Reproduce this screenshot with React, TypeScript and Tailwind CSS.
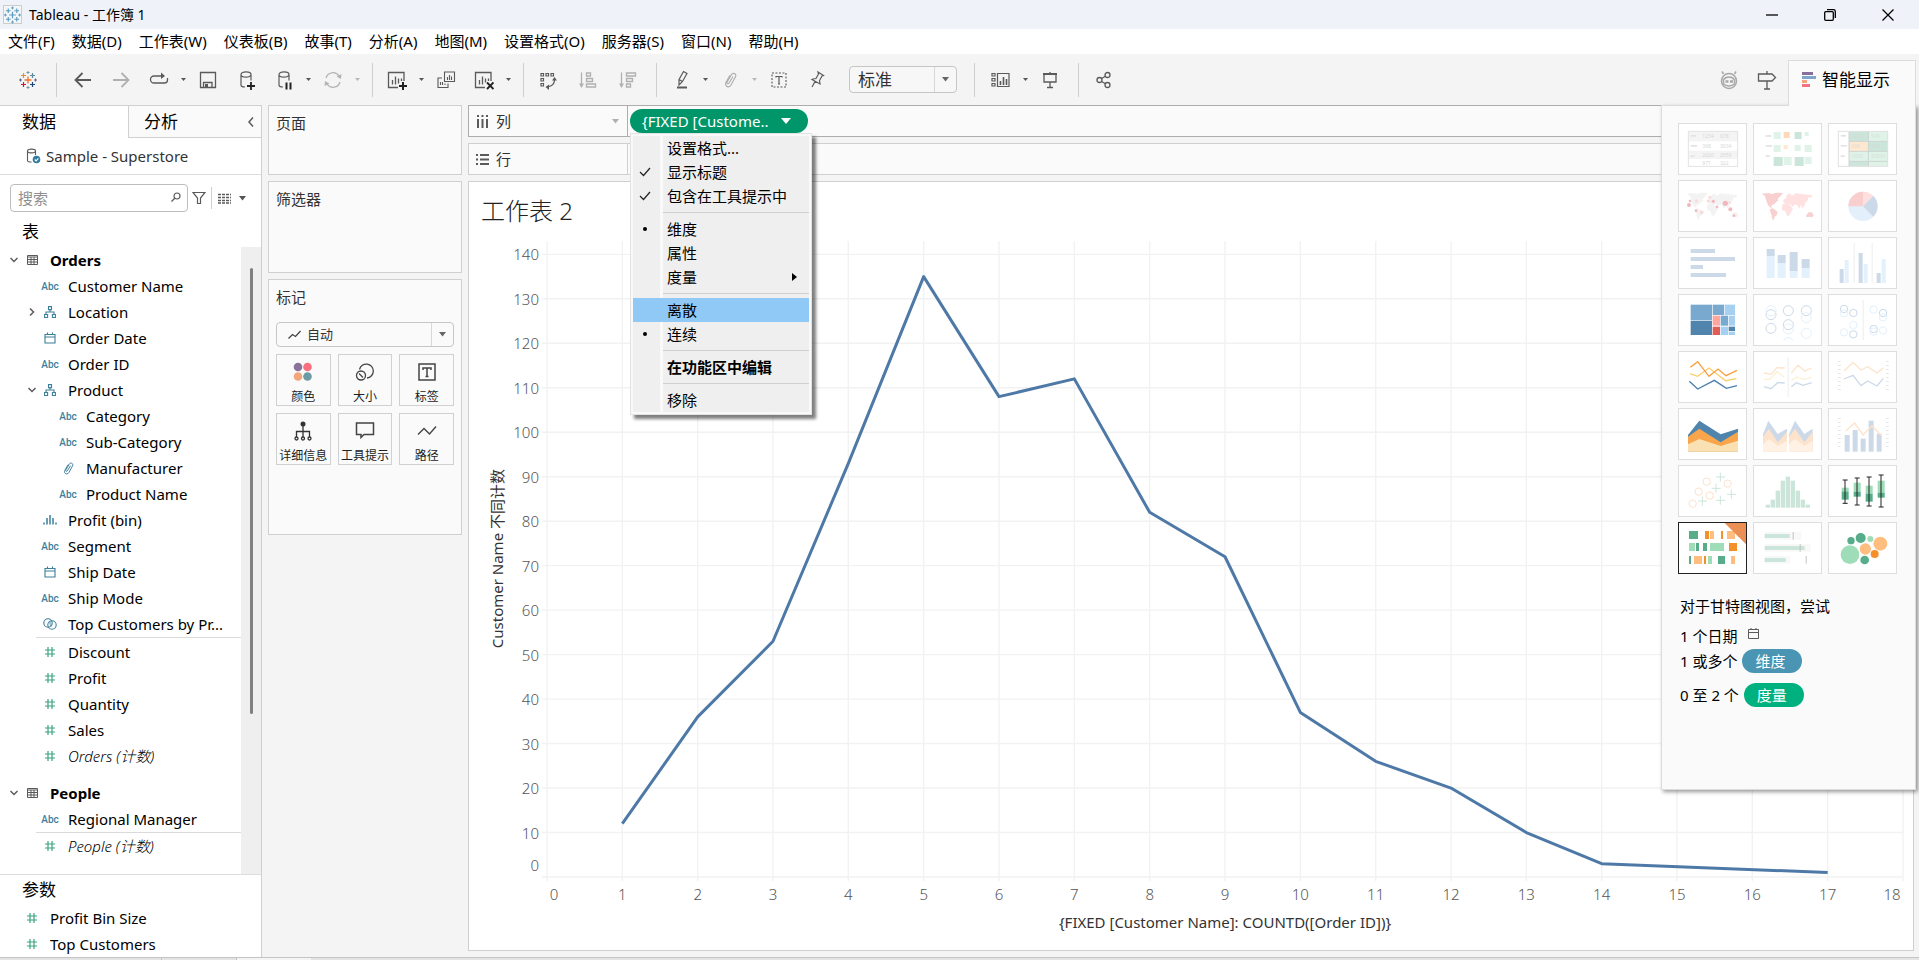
import React from 'react';

type Kind = 'abc' | 'geo' | 'date' | 'clip' | 'bin' | 'set' | 'num';

interface Field {
  name: string;
  kind: Kind;
  level?: number;
  open?: boolean;
  arrow?: boolean;
  italic?: boolean;
}

const orderDimensions: Field[] = [
  { name: 'Customer Name', kind: 'abc' },
  { name: 'Location', kind: 'geo', arrow: true },
  { name: 'Order Date', kind: 'date' },
  { name: 'Order ID', kind: 'abc' },
  { name: 'Product', kind: 'geo', arrow: true, open: true },
  { name: 'Category', kind: 'abc', level: 1 },
  { name: 'Sub-Category', kind: 'abc', level: 1 },
  { name: 'Manufacturer', kind: 'clip', level: 1 },
  { name: 'Product Name', kind: 'abc', level: 1 },
  { name: 'Profit (bin)', kind: 'bin' },
  { name: 'Segment', kind: 'abc' },
  { name: 'Ship Date', kind: 'date' },
  { name: 'Ship Mode', kind: 'abc' },
  { name: 'Top Customers by Pr...', kind: 'set' },
];

const orderMeasures: Field[] = [
  { name: 'Discount', kind: 'num' },
  { name: 'Profit', kind: 'num' },
  { name: 'Quantity', kind: 'num' },
  { name: 'Sales', kind: 'num' },
  { name: 'Orders (计数)', kind: 'num', italic: true },
];

const menus = ['文件(F)', '数据(D)', '工作表(W)', '仪表板(B)', '故事(T)', '分析(A)', '地图(M)', '设置格式(O)', '服务器(S)', '窗口(N)', '帮助(H)'];

const points = [
  [1, 12], [2, 36], [3, 53], [4, 93], [5, 135], [6, 108], [7, 112], [8, 82],
  [9, 72], [10, 37], [11, 26], [12, 20], [13, 10], [14, 3], [17, 1],
];

const X_MAX = 18;
const Y_MAX = 143;

interface SvgProps {
  w?: number;
  h?: number;
  className?: string;
  children: React.ReactNode;
}

const Svg = ({ w = 20, h = 20, className = 'text-[#5a5a5a]', children }: SvgProps) => (
  <svg width={w} height={h} viewBox={`0 0 ${w} ${h}`} fill="none" stroke="currentColor" strokeWidth="1.3" className={`shrink-0 ${className}`} aria-hidden="true">
    {children}
  </svg>
);

const Caret = ({ className = 'text-[#666]' }: { className?: string }) => (
  <svg width="7" height="5" viewBox="0 0 7 5" fill="currentColor" className={`shrink-0 ${className}`} aria-hidden="true">
    <path d="M0 0h7L3.5 4.5z" />
  </svg>
);

const Clip = () => (
  <path d="M13 6.500L9 13c-.8 1.300-2.600.3-1.900-1.100L11.500 4.500c1.500-2.500 5.500-.6 4 2.200L11 15c-2 3.500-7 1-5-2.700l4-7" strokeWidth="1.200" />
);

const KindIcon = ({ kind }: { kind: Kind }) => {
  if (kind === 'abc') return <span className="font-['Roboto'] text-[10px] font-medium text-[#3b7f9c]">Abc</span>;
  if (kind === 'geo')
    return (
      <Svg w={12} h={12} className="text-[#3b7f9c]">
        <path d="M4.500.600h3v3h-3zM.600 8.500h3v3h-3zM8.400 8.500h3v3h-3zM6 3.600v2.400M2 8.500V6h8v2.500" strokeWidth="1.100" />
      </Svg>
    );
  if (kind === 'date')
    return (
      <Svg w={12} h={12} className="text-[#3b7f9c]">
        <path d="M1 2.500h10v8.500H1zM1 5h10M3.500.500v2M8.500.500v2" strokeWidth="1.100" />
      </Svg>
    );
  if (kind === 'clip')
    return (
      <svg width="13" height="13" viewBox="3 2 15 16" fill="none" stroke="#3b7f9c">
        <Clip />
      </svg>
    );
  if (kind === 'bin')
    return (
      <Svg w={14} h={12} className="text-[#3b7f9c]">
        <path d="M1 8.500v2M4 4v6.500M7 1v9.500M10 4v6.500M13 8.500v2" strokeWidth="1.500" />
      </Svg>
    );
  if (kind === 'set')
    return (
      <Svg w={14} h={12} className="text-[#3b7f9c]">
        <circle cx="5" cy="5" r="4.200" strokeWidth="1.100" />
        <circle cx="9" cy="7" r="4.200" strokeWidth="1.100" />
        <path d="M6.500 3.500l2 5" strokeWidth="2" opacity=".5" />
      </Svg>
    );
  return (
    <Svg w={12} h={12} className="text-[#3ba37f]">
      <path d="M4 1v10M8 1v10M1 4h10M1 8h10" strokeWidth="1.200" />
    </Svg>
  );
};

const Chevron = ({ open }: { open?: boolean }) => (
  <Svg w={8} h={8}>
    <path d={open ? 'M.5 2l3.500 3.500L7.500 2' : 'M2 .5l3.500 3.500L2 7.500'} strokeWidth="1.500" />
  </Svg>
);

const FieldRow = ({ field }: { field: Field }) => (
  <li className={`flex h-[26px] items-center ${field.level ? 'pl-[46px]' : 'pl-[28px]'}`}>
    <span className="flex w-2 shrink-0">{field.arrow && <Chevron open={field.open} />}</span>
    <span className="flex w-[28px] shrink-0 justify-center"><KindIcon kind={field.kind} /></span>
    <span className={`pl-1 whitespace-nowrap ${field.italic ? 'font-light italic' : ''}`}>{field.name}</span>
  </li>
);

const TableHeading = ({ name }: { name: string }) => (
  <div className="flex h-[26px] items-center pl-[10px]">
    <Chevron open />
    <span className="flex w-[28px] justify-center">
      <Svg w={11} h={10}>
        <path d="M.5.500h10v9H.5zM.5 2h10M.5 4.500h10M.5 7h10M4 2v7.500M7 2v7.500" strokeWidth="1" />
      </Svg>
    </span>
    <h3 className="pl-1 font-bold">{name}</h3>
  </div>
);

const Tool = ({ label, children }: { label: string; children: React.ReactNode }) => (
  <button aria-label={label} className="flex h-9 w-[38px] shrink-0 items-center justify-center">{children}</button>
);

const ToolCaret = ({ label, dim }: { label: string; dim?: boolean }) => (
  <button aria-label={label} className="flex h-9 w-[11px] shrink-0 items-center justify-center">
    <svg width="5" height="3" viewBox="0 0 5 3" fill={dim ? '#b8b8b8' : '#555'} aria-hidden="true"><path d="M0 0h5L2.500 3z" /></svg>
  </button>
);

const Rule = () => <span className="mr-[5px] ml-[9px] h-[34px] w-px shrink-0 bg-[#cfcfcf]" />;

const Logo = ({ muted }: { muted?: boolean }) => {
  const tint = (c: string) => (muted ? '#5b9bc0' : c);
  return (
    <svg width="18" height="18" viewBox="0 0 18 18" fill="none" aria-hidden="true">
      <path d="M9 5.500v7M5.500 9h7" stroke={tint('#e8762d')} strokeWidth="1.300" />
      <path d="M4.500 2v5M2 4.500h5" stroke={tint('#e0912f')} strokeWidth="1.200" />
      <path d="M13.500 2v5M11 4.500h5" stroke={tint('#5b879b')} strokeWidth="1.200" />
      <path d="M4.500 11v5M2 13.500h5" stroke={tint('#c72035')} strokeWidth="1.200" />
      <path d="M13.500 11v5M11 13.500h5" stroke={tint('#1f457e')} strokeWidth="1.200" />
      <path d="M9 0v3M7.500 1.500h3M9 15v3M7.500 16.500h3" stroke={tint('#7199a6')} />
      <path d="M1.500 7.500v3M0 9h3M16.500 7.500v3M15 9h3" stroke={tint('#5c6692')} />
    </svg>
  );
};

const Cylinder = () => (
  <path d="M5 4.500V15c0 1 1.500 2 4 2M15 4.500v6M5 4.500C5 1 15 1 15 4.500S5 8 5 4.500z" strokeWidth="1.200" />
);

const Toolbar = () => (
  <div className="relative flex h-[51px] shrink-0 items-center bg-[#f4f4f4]">
    <button aria-label="Tableau" className="flex w-[47px] justify-center pl-2"><Logo /></button>
    <Rule />
    <div className="flex pl-[2px]">
      <Tool label="撤消"><Svg><path d="M18 10H3M9.500 3L2.500 10l7 7" strokeWidth="1.800" /></Svg></Tool>
      <Tool label="重做"><Svg className="text-[#b0b0b0]"><path d="M2 10h15M10.500 3l7 7-7 7" strokeWidth="1.800" /></Svg></Tool>
      <Tool label="恢复">
        <Svg><path d="M14 6H5a3.500 3.500 0 000 7h10.500a3 3 0 003-3V8" /><path d="M12 2.500L16 6l-4 3z" fill="currentColor" stroke="none" /></Svg>
      </Tool>
      <ToolCaret label="恢复选项" />
      <Tool label="保存"><Svg><path d="M2.500 2.500h15v15h-15zM5.500 17.500v-5h8.500v5" /><path d="M7 14h3v3.500H7z" fill="currentColor" stroke="none" /></Svg></Tool>
      <Tool label="新建数据源"><Svg><Cylinder /><path d="M15 12v8M11 16h8" stroke="#222" strokeWidth="1.800" /></Svg></Tool>
      <Tool label="暂停更新"><Svg><Cylinder /><path d="M12.500 12.500v7M16.500 12.500v7" stroke="#222" strokeWidth="2" /></Svg></Tool>
      <ToolCaret label="更新选项" />
      <Tool label="刷新">
        <Svg className="text-[#b4b4b4]"><path d="M3 8a7.200 7.200 0 0113-2M17 12a7.200 7.200 0 01-13 2" /><path d="M18.500 4l-.500 5-4.500-2.500zM1.500 16l.5-5 4.500 2.500z" fill="currentColor" stroke="none" /></Svg>
      </Tool>
      <ToolCaret label="刷新选项" dim />
    </div>
    <Rule />
    <div className="flex">
      <Tool label="新建工作表"><Svg><path d="M11 17.500H1.500v-15h15.500V11M5.500 10v4.500M8.500 6.500v8M11.500 8.500v5M14.500 8.500V11" /><path d="M16 12v8M12 16h8" stroke="#222" strokeWidth="2" /></Svg></Tool>
      <ToolCaret label="新建选项" />
      <Tool label="复制"><Svg><path d="M8.500 2h10v9.500h-10zM6 8H2v9.500h10v-4M11.500 7v3M13.500 5v5M15.500 6.500V10M4.500 12v3M6.500 12v3M9 13.500V15" strokeWidth="1.100" /></Svg></Tool>
      <Tool label="清除工作表"><Svg><path d="M11 17.500H1.500v-15h15.500V11M5.500 10v4.500M8.500 6.500v8M11.500 8.500v4M14.500 8.500V11" /><path d="M13 12.500l6.500 6.500M19.500 12.500L13 19" stroke="#222" strokeWidth="1.900" /></Svg></Tool>
      <ToolCaret label="清除选项" />
    </div>
    <Rule />
    <div className="flex gap-0.5">
      <Tool label="交换行和列">
        <Svg><path d="M3 3.500h2.500V6H3zM8 3.500h2.500V6H8zM13 3.500h2.500V6H13zM3 8.500h2.500V11H3zM3 13.500h2.500V16H3zM16.500 10c0 4-2 6-7 7" strokeWidth="1.200" /><path d="M16.500 7l2.500 3.500h-5zM7.500 17l3.500-2.500V20z" fill="currentColor" stroke="none" /></Svg>
      </Tool>
      <Tool label="升序排序">
        <Svg className="text-[#b0b0b0]"><path d="M3.500 2.500v12M8.500 3h4v3h-4zM8.500 8.500h6v3h-6zM8.500 14h9v3h-9z" /><path d="M1 13.500h5L3.500 18z" fill="currentColor" stroke="none" /></Svg>
      </Tool>
      <Tool label="降序排序">
        <Svg className="text-[#b0b0b0]"><path d="M3.500 2.500v12M8.500 3h9v3h-9zM8.500 8.500h6v3h-6zM8.500 14h4v3h-4z" /><path d="M1 13.500h5L3.500 18z" fill="currentColor" stroke="none" /></Svg>
      </Tool>
    </div>
    <Rule />
    <div className="flex">
      <Tool label="突出显示"><Svg><path d="M8 9.500L12.500 1.500l3.500 2-4.500 8-3.500 3.500zM8 9.500l3.500 2" strokeWidth="1.200" /><path d="M6 17.500h10" strokeWidth="2" /></Svg></Tool>
      <ToolCaret label="突出显示选项" />
      <Tool label="组成员"><Svg className="text-[#b0b0b0]"><Clip /></Svg></Tool>
      <ToolCaret label="组选项" dim />
      <Tool label="显示标记标签"><Svg><path d="M3 3h14v14H3z" strokeDasharray="2 1.500" strokeWidth="1.100" /><path d="M7 7.500V6.500h6v1M10 6.500v7.500M9 14h2" strokeWidth="1.200" /></Svg></Tool>
      <Tool label="固定轴"><Svg><path d="M11 2l5.500 3.500-1.500.5-2.500 4.500.5 3.500-8-4.500 1-.5 3-.5L11.500 4zM8 11.500L5 17" strokeWidth="1.200" /></Svg></Tool>
    </div>
    <div className="relative mr-2 ml-[13px] flex">
      <select aria-label="适合" className="h-[27px] w-[108px] appearance-none rounded-sm border border-[#c6c6c6] bg-[#f7f7f7] pl-2 text-[17px] leading-6 text-[#333]">
        <option>标准</option>
      </select>
      <span className="pointer-events-none absolute inset-y-px right-px flex w-[22px] items-center justify-center border-l border-[#d8d8d8]"><Caret /></span>
    </div>
    <Rule />
    <div className="flex pl-[2px]">
      <Tool label="显示/隐藏卡"><Svg><path d="M6.500 3.500H18v13H6.500zM1 3.500h3v2.500H1zM1 8.500h3V11H1zM1 13.500h3V16H1z" strokeWidth="1.200" /><path d="M9.500 11v4M12.500 7v8M15.500 9v6" strokeWidth="1.600" /></Svg></Tool>
      <ToolCaret label="卡选项" />
      <Tool label="演示模式"><Svg><path d="M4 4v8h12V4M10 12v5.500M7 17.500h6M10 2v2" /><path d="M3 4h14" strokeWidth="2" /></Svg></Tool>
    </div>
    <Rule />
    <Tool label="共享"><Svg><circle cx="6.500" cy="10" r="2.500" /><circle cx="14.500" cy="5" r="2.500" /><circle cx="14.500" cy="15" r="2.500" /><path d="M8.500 8.500l4-2.300M8.500 11.500l4 2.300" /></Svg></Tool>

    <div className="ml-auto flex h-full items-center">
      <Tool label="Data Guide">
        <Svg className="text-[#a8a8a8]"><circle cx="10" cy="11" r="7.500" strokeWidth="1.500" /><path d="M4.500 4L3 1.500M15.500 4L17 1.500M4.500 10c2-4 9-4 11 0v4c-3 2.500-8 2.500-11 0z" strokeWidth="1.500" /><path d="M6.500 11.500h3M11 11.500h3" strokeWidth="2.500" /></Svg>
      </Tool>
      <Tool label="指南"><Svg><path d="M1.500 4H15l3.500 3.500L15 11H1.500zM10 1v3M10 11v8M7 19h6" /></Svg></Tool>
      <button className="relative z-30 mr-[3px] -mb-px ml-0.5 flex h-[46px] w-[128px] items-center gap-[6px] self-end border border-b-0 border-[#dcdcdc] bg-[#fafafa] pb-[7px] pl-[13px] text-[17px]">
        <svg width="14" height="16" viewBox="0 0 14 16" aria-hidden="true">
          <path d="M0 0h11v3H0z" fill="#866f9a" /><path d="M0 4h14v3H0z" fill="#7fa5cb" />
          <path d="M0 8h5v3H0z" fill="#f3a57c" /><path d="M0 12h8v3H0z" fill="#f6707f" />
        </svg>
        智能显示
      </button>
    </div>
    <ShowMe />
  </div>
);

const world = [
  'M26 41l20-2 12 3 10-4 22 1-8 10-9 8 4 4-7 4-6 8-6 1-4 6 8 8-5-2-12-10-5-14-4-14z',
  'M52 86l10 0 12 10-3 10-6 4-4 12-4-8-2-12-4-8z',
  'M88 73l10-3 12 4 10 12-6 10-4 10-8 2-5-14-10-4z',
  'M90 66l3-8 5-2 4-12 8-4 6 8 12-8 12 1 38 5-4 8-8-2-2 10-6 4-4 12-6 8-4-12-6 12-6-12-8 0-6 6-6-8-8 2z',
  'M160 104l8-8 10 2 4 8-4 6-8-2-10 2z',
];

const line = (color: string, d: string) => <path d={d} fill="none" stroke={color} strokeWidth="4" />;
const bars = (color: string, rects: number[][]) => rects.map(([x, y, w, h], i) => <rect key={i} x={x} y={y} width={w} height={h} fill={color} />);
const rings = (color: string, list: number[][], r: number) => list.map(([x, y], i) => <circle key={i} cx={x} cy={y} r={r} fill="none" stroke={color} strokeWidth="3" />);
const dots = (color: string, list: number[][]) => list.map(([x, y, r], i) => <circle key={i} cx={x} cy={y} r={r} fill={color} />);
const nums = (list: [number, number, string][]) => list.map(([x, y, t], i) => <text key={i} x={x} y={y} fontSize="15" fill="#d4d8d6">{t}</text>);

// all thumbnails share a 207 x 156 drawing area
const charts: { title: string; art: React.ReactNode }[] = [
  {
    title: '文本表',
    art: (
      <>
        {bars('#f4f4f4', [[31, 25, 148, 30], [31, 83, 148, 25]])}
        {bars('#e3e3e3', [[38, 36, 16, 5], [38, 66, 19, 5], [38, 97, 12, 5]])}
        <rect x="31" y="25" width="148" height="105" fill="none" stroke="#e3e3e3" strokeWidth="3" />
        {nums([[73, 46, '1234'], [126, 46, '678'], [73, 74, '368'], [126, 74, '3034'], [73, 101, '2620'], [126, 101, '2559'], [73, 125, '971'], [126, 125, '322']])}
      </>
    ),
  },
  {
    title: '热图',
    art: (
      <>
        {bars('#e6e6e6', [[38, 36, 17, 6], [38, 66, 19, 6], [38, 96, 12, 6]])}
        {bars('#e0f3e8', [[62, 27, 21, 21], [155, 27, 12, 12], [62, 66, 21, 21], [125, 66, 18, 18], [155, 66, 21, 21], [92, 102, 24, 24], [155, 102, 21, 21]])}
        {bars('#cce5da', [[125, 27, 21, 21], [62, 102, 27, 27], [125, 102, 27, 27]])}
        {bars('#fcd9b8', [[92, 27, 18, 18]])}
        {bars('#fee8d0', [[92, 66, 12, 12]])}
      </>
    ),
  },
  {
    title: '突出显示表',
    art: (
      <>
        {bars('#e0f3e8', [[121, 25, 58, 30], [63, 85, 58, 30], [121, 85, 58, 45]])}
        {bars('#cce5da', [[63, 25, 58, 30], [121, 55, 58, 30], [63, 115, 58, 15]])}
        {bars('#fee8d0', [[63, 55, 58, 30]])}
        {bars('#e3e3e3', [[38, 36, 16, 5], [38, 66, 19, 5], [38, 97, 12, 5]])}
        <path d="M63 25v106M121 25v106M63 55h116M63 85h116M63 115h116" stroke="#ccd4d0" strokeWidth="3" />
        <rect x="31" y="25" width="148" height="105" fill="none" stroke="#e0e0e0" strokeWidth="3" />
        <g opacity=".7">{nums([[70, 45, '1234'], [129, 45, '546'], [70, 75, '368'], [129, 75, '340'], [70, 105, '2620'], [129, 105, '53890']])}</g>
      </>
    ),
  },
  {
    title: '符号地图',
    art: (
      <>
        {world.map((d) => <path key={d} d={d} fill="#f3f3f3" />)}
        {dots('#f0b9bf', [[33, 75, 6], [36, 63, 4], [142, 70, 8], [106, 64, 5], [157, 88, 6], [54, 92, 4], [117, 81, 4], [168, 107, 4]])}
        {dots('#fbdcdc', [[55, 63, 5], [96, 52, 5], [91, 63, 5], [71, 97, 6], [155, 68, 4]])}
      </>
    ),
  },
  { title: '填充地图', art: world.map((d, i) => <path key={d} d={d} fill={i < 2 || i === 4 ? '#f8d0d0' : '#ffe1e1'} />) },
  {
    title: '饼图',
    art: (
      <>
        <circle cx="105" cy="79" r="44" fill="#e3f0fb" />
        <path d="M105 79H61a44 44 0 0144-44z" fill="#f8cfcd" />
        <path d="M105 79V35a44 44 0 0131 13z" fill="#ffe0e0" />
        <path d="M105 79l31-31a44 44 0 010 62z" fill="#ccd9e8" />
      </>
    ),
  },
  { title: '水平条', art: bars('#ccd9e8', [[38, 36, 73, 12], [38, 60, 133, 12], [38, 84, 37, 12], [38, 108, 106, 12]]) },
  {
    title: '堆叠条',
    art: (
      <>
        {bars('#ccd9e8', [[41, 36, 24, 22], [74, 54, 24, 24], [110, 45, 24, 57], [146, 66, 24, 27]])}
        {bars('#e3f1fc', [[41, 57, 24, 66], [74, 78, 24, 45], [110, 102, 24, 21], [146, 93, 24, 30]])}
      </>
    ),
  },
  {
    title: '并排条',
    art: (
      <>
        {bars('#ccd9e8', [[35, 96, 12, 42], [92, 48, 12, 90], [146, 108, 12, 30]])}
        {bars('#e3f1fc', [[50, 69, 12, 69], [107, 81, 12, 57], [161, 66, 12, 72]])}
        {bars('#ededed', [[77, 18, 3, 120], [131, 18, 3, 120]])}
      </>
    ),
  },
  {
    title: '树状图',
    art: (
      <>
        {bars('#7aa9cf', [[38, 32, 64, 46], [104, 32, 34, 31], [128, 65, 22, 30]])}
        {bars('#5084ad', [[38, 80, 64, 43], [152, 98, 19, 13]])}
        {bars('#a6d0f0', [[140, 32, 31, 31], [152, 65, 19, 30], [128, 98, 22, 25], [152, 113, 19, 10]])}
        {bars('#ffa59c', [[104, 65, 22, 30]])}
        {bars('#e15e57', [[104, 98, 22, 25]])}
      </>
    ),
  },
  {
    title: '圆视图',
    art: (
      <>
        {rings('#ccd9e8', [[54, 62], [54, 103], [106, 50], [106, 92], [160, 50]], 15)}
        {rings('#e3f1fc', [[54, 50], [106, 105], [160, 71], [160, 118]], 15)}
        <path d="M92 140a15 15 0 0128 0" fill="none" stroke="#e3f1fc" strokeWidth="3" />
      </>
    ),
  },
  {
    title: '并排圆',
    art: (
      <>
        {rings('#ccd9e8', [[48, 45], [76, 57], [165, 57], [137, 105], [76, 121]], 11)}
        {rings('#e3f1fc', [[48, 58], [76, 93], [48, 115], [137, 47], [165, 70], [137, 113], [165, 109]], 11)}
        {bars('#ededed', [[104, 18, 3, 120]])}
      </>
    ),
  },
  {
    title: '连续线',
    art: (
      <>
        {line('#f8cf6a', 'M36 68l23 8 34-25 50 38 32-6')}
        {line('#f89f41', 'M37 49l22-17 34 44 27-22 24 20 33-16')}
        {line('#4a7fb0', 'M34 91l25 23 50-26 36 24 32-8')}
      </>
    ),
  },
  {
    title: '离散线',
    art: (
      <>
        {line('#fde3cb', 'M33 66l21 4 18-20 23 1M115 66l20-23 20 17 21-9')}
        {line('#fdf0d6', 'M33 86l18-2 21-22 21 16M115 88l17-10 20 8 24-7')}
        {line('#ccd9e8', 'M33 107l21 6 20-18 21 1M115 107l15-12 20 8 26-8')}
        {bars('#ededed', [[104, 18, 3, 120]])}
      </>
    ),
  },
  {
    title: '双线',
    art: (
      <>
        {line('#fde3cb', 'M48 60l27-26 24 23 20-10 28 19 19-16')}
        {line('#ccd9e8', 'M48 84l27-11 24 31 20-14 28 15 19-23')}
        <path d="M34 30v95M178 30v95" stroke="#e6e6e6" strokeWidth="8" strokeDasharray="3 9" />
      </>
    ),
  },
  {
    title: '连续区域图',
    art: (
      <>
        <path d="M30 81l34-43 64 41 52-17v69H30z" fill="#4f84ad" />
        <path d="M30 86l34-24 64 41 52-32v60H30z" fill="#f9a54b" />
        <path d="M30 109l34-16 64 21 52-16v33H30z" fill="#f9e1b4" />
      </>
    ),
  },
  {
    title: '离散区域图',
    art: (
      <>
        <path d="M30 79l16-41 28 40 28-16v69H30zM108 79l18-41 28 40 25-16v69h-71z" fill="#ccd9e8" />
        <path d="M30 86l18-24 26 41 28-32v60H30zM108 86l18-24 28 41 25-32v60h-71z" fill="#fde3cb" />
        <path d="M30 109l18-16 26 21 28-16v33H30zM108 109l18-16 28 21 25-16v33h-71z" fill="#fff2e4" />
      </>
    ),
  },
  {
    title: '双组合图',
    art: (
      <>
        {bars('#ccd9e8', [[50, 81, 15, 50], [74, 66, 15, 65], [98, 92, 15, 39], [122, 38, 15, 93], [146, 77, 15, 54]])}
        {line('#fde3cb', 'M53 69l27-24 25 36 27-27 27 28')}
        <path d="M34 30v95M178 30v95" stroke="#e6e6e6" strokeWidth="8" strokeDasharray="3 9" />
      </>
    ),
  },
  {
    title: '散点图',
    art: (
      <>
        {rings('#fde3cb', [[86, 50], [149, 56], [62, 80], [95, 92], [44, 116]], 11)}
        <path d="M114 36h27M127 23v27M101 70h27M114 56v27M147 88h27M160 74v27M114 106h27M127 92v27M60 108h27M73 95v27" stroke="#cce5da" strokeWidth="3" />
      </>
    ),
  },
  { title: '直方图', art: bars('#cce5da', [[38, 119, 13, 9], [53, 104, 13, 24], [68, 77, 13, 51], [83, 47, 13, 81], [98, 35, 13, 93], [113, 47, 13, 81], [128, 77, 13, 51], [143, 104, 13, 24], [158, 119, 13, 9]]) },
  {
    title: '盒须图',
    art: (
      <>
        {bars('#9fdcb8', [[41, 68, 21, 13], [77, 53, 21, 27], [113, 62, 21, 24], [149, 47, 21, 36]])}
        {bars('#57ad8a', [[41, 80, 21, 24], [77, 80, 21, 15], [113, 86, 21, 24], [149, 83, 21, 15]])}
        <path d="M51 45v70M44 45h15M44 115h15M87 39v81M80 39h15M80 120h15M123 36v87M116 36h15M116 123h15M159 30v96M152 30h15M152 126h15" stroke="#222" strokeWidth="3" />
      </>
    ),
  },
  {
    title: '甘特图',
    art: (
      <>
        {bars('#57ad8a', [[33, 27, 27, 24], [54, 63, 9, 24], [75, 63, 12, 24], [33, 102, 6, 24], [120, 102, 21, 24]])}
        {bars('#9fdcb8', [[33, 63, 18, 24], [96, 63, 42, 24], [90, 102, 12, 24]])}
        {bars('#f58f2a', [[81, 27, 12, 24], [129, 27, 6, 24], [153, 63, 24, 24], [78, 102, 6, 24]])}
        {bars('#ffbe80', [[96, 27, 12, 24], [147, 27, 24, 24], [48, 102, 24, 24], [159, 102, 12, 24]])}
        <path d="M137 0h70v70z" fill="#ec8f55" />
      </>
    ),
  },
  {
    title: '标靶图',
    art: (
      <>
        {bars('#f8f8f8', [[35, 30, 110, 23], [35, 66, 138, 23], [35, 102, 75, 23]])}
        {bars('#cce5da', [[35, 36, 75, 12], [35, 72, 120, 12], [35, 108, 63, 12]])}
        {bars('#c2c2c2', [[119, 30, 3, 23], [140, 66, 3, 23], [158, 102, 3, 23]])}
      </>
    ),
  },
  {
    title: '填充气泡图',
    art: (
      <>
        {dots('#9fdcb8', [[66, 98, 28], [127, 51, 9]])}
        {dots('#57ad8a', [[69, 56, 11], [98, 48, 15], [110, 114, 13]])}
        {dots('#ffbe80', [[112, 81, 17], [157, 65, 21]])}
        {dots('#f58f2a', [[140, 96, 12]])}
      </>
    ),
  },
];

function ShowMe() {
  return (
    <aside aria-label="智能显示" className="absolute top-full right-[3px] z-20 h-[685px] w-[255px] border border-[#dcdcdc] bg-[#fafafa] pt-[17px] pl-4 text-[15px] shadow-[2px_2px_4px_rgba(0,0,0,0.4)]">
      <div className="grid w-[219px] grid-cols-3 gap-x-[6px] gap-y-[5px]">
        {charts.map((c) => (
          <button key={c.title} title={c.title} className={`h-[52px] overflow-hidden border bg-white ${c.title === '甘特图' ? 'border-[#222]' : 'border-[#dedede]'}`}>
            <svg viewBox="3 3 201 150" className="size-full" aria-hidden="true">{c.art}</svg>
          </button>
        ))}
      </div>
      <div className="pt-5 pl-[2px]">
        <p className="h-6 leading-6">对于甘特图视图，尝试</p>
        <p className="mt-[6px] flex h-6 gap-[11px] leading-6">
          1 个日期
          <Svg w={11} h={11} className="mt-1 text-[#5a5a5a]"><path d="M.5 1.500h10v9H.5zM.5 4.500h10M3 0v1.500M8 0v1.500" strokeWidth="1" /></Svg>
        </p>
        <p className="mt-px flex h-6 items-center gap-[5px]">
          1 或多个
          <span className="h-6 w-[60px] rounded-full bg-[#4a95b4] pr-1 text-center leading-6 text-white">维度</span>
        </p>
        <p className="mt-[10px] flex h-6 items-center gap-[5px]">
          0 至 2 个
          <span className="h-6 w-[60px] rounded-full bg-[#00b180] pr-1 text-center leading-6 text-white">度量</span>
        </p>
      </div>
    </aside>
  );
}

const DataPane = () => (
  <aside className="flex w-[262px] shrink-0 flex-col border-t border-r border-[#d0d0d0] bg-white text-[15px]">
    <div role="tablist" className="flex h-8 shrink-0 text-[17px]">
      <button role="tab" aria-selected="true" className="w-32 pl-[22px] text-left">数据</button>
      <button role="tab" className="flex flex-1 items-center justify-between border-b border-l border-[#d0d0d0] bg-[#fafafa] pr-[6px] pl-[15px]">
        分析
        <Svg w={8} h={10}><path d="M6 .5L2 5l4 4.500" strokeWidth="1.500" /></Svg>
      </button>
    </div>
    <div className="flex h-[37px] shrink-0 items-center gap-[5px] border-b border-[#dedede] pl-[26px] text-[#333]">
      <Svg w={15} h={16}>
        <path d="M1.500 3v9.500c0 1 2 1.500 4 1.500M9.500 3v4M1.500 3c0-2.500 8-2.500 8 0s-8 2.500-8 0z" strokeWidth="1.100" />
        <circle cx="10.500" cy="11.500" r="3.800" fill="#2f7ba4" stroke="none" />
        <path d="M8.700 11.500l1.400 1.400 2.300-2.600" stroke="#fff" strokeWidth="1.100" />
      </Svg>
      Sample - Superstore
    </div>
    <div className="flex shrink-0 items-center pt-[9px] pl-[10px]">
      <div className="relative">
        <input aria-label="搜索" placeholder="搜索" className="h-[28px] w-[178px] rounded-sm border border-[#bdbdbd] pl-[7px] placeholder:text-[#8f8f8f]" />
        <Svg w={10} h={10} className="absolute top-2 right-[7px] text-[#5a5a5a]"><circle cx="6" cy="4" r="3" strokeWidth="1.200" /><path d="M4 6L.5 9.500" /></Svg>
      </div>
      <button aria-label="筛选" className="ml-[4px] flex"><Svg w={14} h={14}><path d="M1 1.500h12L8.500 7v5.500h-3V7z" strokeWidth="1.200" /></Svg></button>
      <span className="ml-[5px] h-[22px] w-px bg-[#d0d0d0]" />
      <button aria-label="视图" className="ml-[6px] flex items-center gap-2">
        <Svg w={13} h={11}><path d="M0 1.500h13M0 4.500h13M0 7.500h13M0 10h13" strokeDasharray="3 1" strokeWidth="1.300" /></Svg>
        <Caret className="text-[#555]" />
      </button>
    </div>
    <h2 className="h-[35px] shrink-0 pt-2 pl-[22px] text-[17px] leading-6">表</h2>
    <div className="flex min-h-0 flex-1 border-b border-[#dedede]">
      <div className="min-w-0 flex-1 overflow-hidden">
        <TableHeading name="Orders" />
        <ul>{orderDimensions.map((f) => <FieldRow key={f.name} field={f} />)}</ul>
        <ul className="ml-9 border-t border-[#dadada] pt-px [&>li]:-ml-9">
          {orderMeasures.map((f) => <FieldRow key={f.name} field={f} />)}
        </ul>
        <div className="h-[11px]" />
        <TableHeading name="People" />
        <ul><FieldRow field={{ name: 'Regional Manager', kind: 'abc' }} /></ul>
        <ul className="ml-9 border-t border-[#dadada] [&>li]:-ml-9">
          <FieldRow field={{ name: 'People (计数)', kind: 'num', italic: true }} />
        </ul>
      </div>
      <div className="w-5 shrink-0 bg-[#efefef] pt-[21px]"><div className="mx-auto h-[446px] w-[3px] rounded-full bg-[#808080]" /></div>
    </div>
    <div className="h-[82px] shrink-0">
      <h2 className="h-[30px] pl-[22px] text-[17px] leading-[30px]">参数</h2>
      <ul className="[&>li]:-ml-[18px]">
        <FieldRow field={{ name: 'Profit Bin Size', kind: 'num' }} />
        <FieldRow field={{ name: 'Top Customers', kind: 'num' }} />
      </ul>
    </div>
  </aside>
);

const MarkButton = ({ label, children }: { label: string; children: React.ReactNode }) => (
  <button className="flex h-[52px] flex-col items-center border border-[#d0d0d0] pt-[7px] text-[12px] leading-[18px] whitespace-nowrap text-[#222]">
    {children}
    <span className="mt-[6px]">{label}</span>
  </button>
);

const Cards = () => (
  <div className="flex w-[194px] shrink-0 flex-col gap-[6px] text-[15px] text-[#333]">
    <section className="h-[70px] border border-[#d0d0d0] bg-[#fafafa] px-[7px] pt-[5px] leading-6">页面</section>
    <section className="h-[92px] border border-[#d0d0d0] bg-[#fafafa] px-[7px] pt-[5px] leading-6">筛选器</section>
    <section className="h-[256px] border border-[#d0d0d0] bg-[#fafafa] px-[7px] pt-[5px]">
      <h2 className="leading-6">标记</h2>
      <div className="relative mt-[13px] flex items-center">
        <select aria-label="标记类型" className="h-[25px] w-full appearance-none rounded-sm border border-[#c6c6c6] pl-[30px] text-[13px]">
          <option>自动</option>
        </select>
        <Svg w={13} h={10} className="absolute left-3 text-[#444]"><path d="M.5 8.500l4-4 3 2L12.500 1" /></Svg>
        <span className="pointer-events-none absolute inset-y-px right-px flex w-[22px] items-center justify-center border-l border-[#d8d8d8]"><Caret /></span>
      </div>
      <div className="mt-[7px] grid grid-cols-3 gap-[7px]">
        <MarkButton label="颜色">
          <Svg><g stroke="none"><circle cx="5" cy="5" r="4.300" fill="#8a7299" /><circle cx="14.500" cy="5" r="4.300" fill="#f6707f" /><circle cx="5" cy="14.500" r="4.300" fill="#f3a57c" /><circle cx="14.500" cy="14.500" r="4.300" fill="#6c9aa5" /></g></Svg>
        </MarkButton>
        <MarkButton label="大小">
          <Svg className="text-[#444]"><path d="M4.500 7.500a7 7 0 117.500 8.500" /><circle cx="6" cy="13.500" r="4.500" /><path d="M4 11.500l4 4" /></Svg>
        </MarkButton>
        <MarkButton label="标签">
          <Svg className="text-[#444]"><path d="M2 2h16v16H2z" strokeWidth="1.500" /><path d="M6 8V6h8v2M10 6v8.500M8.500 14.500h3" strokeWidth="1.500" /></Svg>
        </MarkButton>
        <MarkButton label="详细信息">
          <Svg className="text-[#333]"><circle cx="10" cy="3" r="2.500" fill="currentColor" stroke="none" /><path d="M10 4v12M3.500 16v-5.500h13V16" /><circle cx="3.500" cy="17.500" r="1.500" fill="#fafafa" /><circle cx="10" cy="17.500" r="1.500" fill="#fafafa" /><circle cx="16.500" cy="17.500" r="1.500" fill="#fafafa" /></Svg>
        </MarkButton>
        <MarkButton label="工具提示">
          <Svg className="text-[#444]"><path d="M1.500 2h17v11.500H9L6 16.500v-3H1.500z" strokeWidth="1.500" /></Svg>
        </MarkButton>
        <MarkButton label="路径">
          <Svg className="text-[#444]"><path d="M1 13.500l6-6 5.500 5.500L19 5.500" strokeWidth="1.400" /></Svg>
        </MarkButton>
      </div>
    </section>
  </div>
);

interface MenuEntry {
  label?: string;
  mark?: 'check' | 'dot';
  active?: boolean;
  bold?: boolean;
  sub?: boolean;
}

const pillMenu: MenuEntry[] = [
  { label: '设置格式...' },
  { label: '显示标题', mark: 'check' },
  { label: '包含在工具提示中', mark: 'check' },
  {},
  { label: '维度', mark: 'dot' },
  { label: '属性' },
  { label: '度量', sub: true },
  {},
  { label: '离散', active: true },
  { label: '连续', mark: 'dot' },
  {},
  { label: '在功能区中编辑', bold: true },
  {},
  { label: '移除' },
];

const PillMenu = () => (
  <ul role="menu" className="absolute top-full left-0 z-10 w-[182px] border border-[#e2e2e2] bg-[#f9f9f9] p-[2px] text-[15px] leading-6 text-black shadow-[4px_4px_3px_rgba(0,0,0,0.5)]">
    {pillMenu.map((m, i) => (
      <li key={i} role={m.label ? 'menuitem' : 'separator'} className={`flex ${m.active ? 'bg-[#90c8f6]' : ''}`}>
        <span className={`mr-[3px] flex w-[27px] shrink-0 items-center justify-center pr-1 ${m.active ? '' : 'bg-[#efefef]'}`}>
          {m.mark === 'check' && <Svg w={12} h={10} className="text-[#222]"><path d="M1 5l3.500 3.500L11 1" strokeWidth="1.200" /></Svg>}
          {m.mark === 'dot' && <span className="size-1 rounded-full bg-black" />}
        </span>
        {m.label ? (
          <span className={`flex h-6 flex-1 items-center justify-between pr-3 pl-1 ${m.active ? '' : 'bg-[#efefef]'} ${m.bold ? 'font-bold' : ''}`}>
            {m.label}
            {m.sub && <svg width="5" height="8" viewBox="0 0 5 8"><path d="M0 0l5 4-5 4z" /></svg>}
          </span>
        ) : (
          <span className="h-[9px] flex-1 bg-[#efefef] pt-1"><span className="block h-px bg-[#cfcfcf]" /></span>
        )}
      </li>
    ))}
  </ul>
);

const Shelves = () => (
  <div className="mb-[6px] flex shrink-0 flex-col gap-[6px] text-[15px] text-[#333]">
    <div className="flex h-8 border border-[#adadad] bg-[#fafafa]">
      <div className="flex w-[159px] items-center border-r border-[#adadad] pl-[7px]">
        <Svg w={13} h={13}><path d="M2 0v2M2 4v9M6.500 0v2M6.500 4v9M11 0v2M11 4v9" strokeWidth="2" /></Svg>
        <span className="ml-[7px] flex-1">列</span>
        <Caret className="mr-2 text-[#b0b0b0]" />
      </div>
      <div className="relative ml-0.5 h-[27px] w-[178px] pt-[3px]">
        <button className="flex h-6 w-full items-center justify-between rounded-full bg-[#009669] pr-[17px] pl-3 text-white">
          {'{FIXED [Custome..'}
          <svg width="10" height="6" viewBox="0 0 10 6" fill="#fff"><path d="M0 0h10L5 6z" /></svg>
        </button>
        <PillMenu />
      </div>
    </div>
    <div className="flex h-8 border border-[#d0d0d0] bg-[#fafafa]">
      <div className="flex w-[159px] items-center border-r border-[#d0d0d0] pl-[7px]">
        <Svg w={13} h={13}><path d="M0 2h2M4 2h9M0 6.500h2M4 6.500h9M0 11h2M4 11h9" strokeWidth="2" /></Svg>
        <span className="ml-[7px]">行</span>
      </div>
    </div>
  </div>
);

const Plot = () => {
  const xs = Array.from({ length: X_MAX + 1 }, (_, i) => i);
  const ys = Array.from({ length: 15 }, (_, i) => i * 10);
  const px = (x: number) => `${(x / X_MAX) * 100}%`;
  const py = (y: number) => `${(1 - y / Y_MAX) * 100}%`;

  return (
    <svg className="size-full overflow-visible text-[15px] font-light" fill="#555">
      <g stroke="#f2f2f2" strokeWidth="1.400">
        {xs.map((x) => <line key={x} x1={px(x)} x2={px(x)} y1="0" y2="100%" />)}
        {ys.map((y) => <line key={y} x1="-5" x2="100%" y1={py(y)} y2={py(y)} />)}
      </g>
      {ys.map((y) => <text key={y} x="-8" y={py(y)} dy={y === 0 ? -6 : 6} textAnchor="end">{y}</text>)}
      <svg y="100%" className="overflow-visible">
        {xs.map((x) => (
          <React.Fragment key={x}>
            <line x1={px(x)} x2={px(x)} y1="0" y2="4" stroke="#f2f2f2" strokeWidth="1.400" />
            <text x={px(x)} y="23" dx={x === 0 ? 7 : x === X_MAX ? -11 : 0} textAnchor="middle">{x}</text>
          </React.Fragment>
        ))}
      </svg>
      <svg width="100%" height="100%" viewBox={`0 0 ${X_MAX} ${Y_MAX}`} preserveAspectRatio="none">
        <polyline
          points={points.map(([x, y]) => `${x},${Y_MAX - y}`).join(' ')}
          fill="none"
          stroke="#4e79a7"
          strokeWidth="3"
          strokeLinejoin="round"
          vectorEffect="non-scaling-stroke"
        />
      </svg>
    </svg>
  );
};

const Sheet = () => (
  <section className="flex min-h-0 flex-1 flex-col border border-[#cfcfcf] bg-white">
    <h1 className="h-[59px] shrink-0 pl-3 text-[24px] leading-[58px] font-light text-[#222]">工作表 2</h1>
    <div className="flex min-h-0 flex-1 pr-[10px]">
      <div className="flex w-[78px] shrink-0 items-center pl-[16px]">
        <span className="rotate-180 text-[15px] leading-6 whitespace-nowrap text-[#333] [text-orientation:sideways] [writing-mode:vertical-rl]">Customer Name 不同计数</span>
      </div>
      <div className="min-w-0 flex-1"><Plot /></div>
    </div>
    <p className="h-[73px] shrink-0 pt-[33px] pl-[68px] text-center text-[15px] leading-6 text-[#333]">{'{FIXED [Customer Name]: COUNTD([Order ID])}'}</p>
  </section>
);

const App = () => {
  return (
    <div className="flex h-screen flex-col overflow-hidden bg-[#f4f4f4] font-['Noto_Sans','Noto_Sans_CJK_SC',sans-serif] text-black">
      <header className="flex h-[29px] shrink-0 items-center bg-[#eff3f9] pl-[3px] text-[14px]">
        <span className="flex size-[19px] items-center justify-center border border-[#ccc] bg-[#f2f6f8]"><Logo muted /></span>
        <span className="pl-[7px]">Tableau - 工作簿 1</span>
        <div className="ml-auto flex">
          <button aria-label="最小化" className="flex w-[58px] justify-center"><Svg w={12} h={12} className="text-black"><path d="M0 6h12" /></Svg></button>
          <button aria-label="还原" className="flex w-[58px] justify-center">
            <Svg w={12} h={12} className="text-black"><rect x=".7" y="2.700" width="8.600" height="8.600" rx="1" /><path d="M3 .700h6.500a1.800 1.800 0 011.800 1.800V9" /></Svg>
          </button>
          <button aria-label="关闭" className="mr-[2px] flex w-[58px] justify-center"><Svg w={12} h={12} className="text-black"><path d="M.5.500l11 11M11.500.500l-11 11" /></Svg></button>
        </div>
      </header>
      <nav className="flex h-[25px] shrink-0 items-center gap-[17px] bg-white pl-2 text-[15px]">
        {menus.map((m) => <button key={m} className="whitespace-nowrap">{m}</button>)}
      </nav>
      <Toolbar />
      <div className="flex min-h-0 flex-1">
        <DataPane />
        <main className="flex min-w-0 flex-1 gap-[6px] pr-[5px] pb-[6px] pl-[6px]">
          <Cards />
          <div className="flex min-w-0 flex-1 flex-col">
            <Shelves />
            <Sheet />
          </div>
        </main>
      </div>
      <footer className="flex h-[3px] shrink-0 border-t border-[#c4c4c4] bg-[#e4e4e4]">
        <span className="w-[162px] border-r border-[#c4c4c4]" />
        <span className="w-[75px] border-r border-[#c4c4c4]" />
        <span className="w-[74px] bg-[#f4f4f4]" />
      </footer>
    </div>
  );
};

export default App;
